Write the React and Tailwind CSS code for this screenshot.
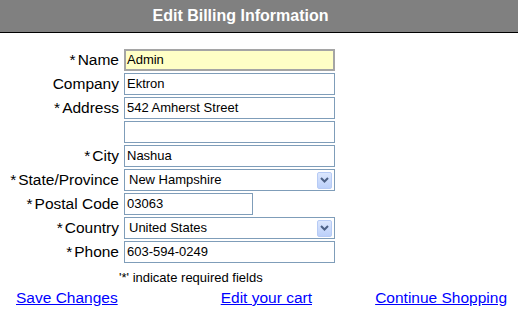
import React from "react";

const rows = [
  { label: "Name", req: true, value: "Admin", focus: true },
  { label: "Company", value: "Ektron" },
  { label: "Address", req: true, value: "542 Amherst Street" },
  { label: "", value: "" },
  { label: "City", req: true, value: "Nashua" },
  { label: "State/Province", req: true, value: "New Hampshire", select: true },
  { label: "Postal Code", req: true, value: "03063", short: true },
  { label: "Country", req: true, value: "United States", select: true },
  { label: "Phone", req: true, value: "603-594-0249" },
];

function Chevron() {
  return (
    <svg width="9" height="6" viewBox="0 0 9 6">
      <path d="M1 1 L4.5 4.5 L8 1" fill="none" stroke="#4d6185" strokeWidth="2" />
    </svg>
  );
}

function Field({ row }) {
  if (row.select) {
    return (
      <div className="flex items-center justify-between h-[22px] w-[211px] border border-[#7f9db9] bg-white pl-[4px] pr-[2px] text-[13px] text-black">
        <span>{row.value}</span>
        <div className="flex items-center justify-center w-[15px] h-[17px] rounded-[2px] border border-[#b7cbf5] bg-gradient-to-b from-[#dce7fd] to-[#bcd0fa]">
          <Chevron />
        </div>
      </div>
    );
  }
  if (row.focus) {
    return (
      <div className="flex items-center h-[22px] w-[211px] border-2 border-[#a5a5a5] bg-[#ffffc6] pl-[1px] text-[13px] text-black">
        {row.value}
      </div>
    );
  }
  return (
    <div
      className={
        "flex items-center h-[22px] border border-[#7f9db9] bg-white pl-[2px] text-[13px] text-black " +
        (row.short ? "w-[129px]" : "w-[211px]")
      }
    >
      {row.value}
    </div>
  );
}

export default function App() {
  return (
    <div className="w-[518px] h-[314px] bg-white overflow-hidden" style={{ fontFamily: '"Liberation Sans", Arial, sans-serif' }}>
      <div className="h-[33px] bg-[#808080] border-b border-black flex items-center justify-center pr-[37px]">
        <h2 className="text-[16px] font-bold text-white">Edit Billing Information</h2>
      </div>

      <div className="grid grid-cols-[119px_211px] gap-x-[5px] gap-y-[2px] mt-[16px]">
        {rows.map((row, i) => (
          <React.Fragment key={i}>
            <div className="flex items-center justify-end h-[22px] text-[15.5px] text-black whitespace-nowrap">
              {row.req && <span className="mr-[2px]">*</span>}
              {row.label}
            </div>
            <Field row={row} />
          </React.Fragment>
        ))}
      </div>

      <p className="text-[13px] text-black mt-[7px] pl-[119px] leading-[16px]">'*' indicate required fields</p>

      <div className="flex items-center mt-[3px] text-[15.5px] leading-[18px]">
        <a href="#" className="ml-[16px] text-[#0000ff] underline">Save Changes</a>
        <a href="#" className="ml-[103px] text-[#0000ff] underline">Edit your cart</a>
        <a href="#" className="ml-auto mr-[11px] text-[#0000ff] underline">Continue Shopping</a>
      </div>
    </div>
  );
}
